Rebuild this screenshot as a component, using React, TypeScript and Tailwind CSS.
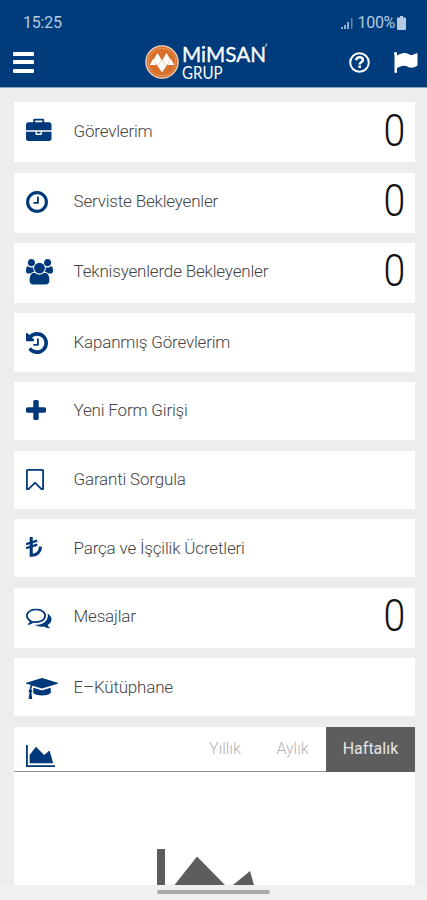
import type { ReactNode } from "react";

function Glyph({
	viewBox,
	d,
	className,
}: {
	viewBox: string;
	d: string;
	className: string;
}) {
	return (
		<svg
			viewBox={viewBox}
			preserveAspectRatio="none"
			fill="currentColor"
			className={className}
		>
			<path d={d} />
		</svg>
	);
}

const menuItems: { label: string; icon: ReactNode; count?: number }[] = [
	{
		label: "Görevlerim",
		count: 0,
		icon: (
			<Glyph
				className="w-[25.5px] h-[22.5px] -translate-y-[2.5px]"
				viewBox="0 0 1792 1536"
				d="M640 256h512v-128h-512v128zm1152 640v480q0 66-47 113t-113 47h-1472q-66 0-113-47t-47-113v-480h672v160q0 26 19 45t45 19h320q26 0 45-19t19-45v-160h672zm-768 0v128h-256v-128h256zm768-480v384h-1792v-384q0-66 47-113t113-47h352v-160q0-40 28-68t68-28h576q40 0 68 28t28 68v160h352q66 0 113 47t47 113z"
			/>
		),
	},
	{
		label: "Serviste Bekleyenler",
		count: 0,
		icon: (
			<Glyph
				className="size-[22px] -translate-y-px"
				viewBox="128 128 1536 1536"
				d="M1024 544v448q0 14-9 23t-23 9h-320q-14 0-23-9t-9-23v-64q0-14 9-23t23-9h224v-352q0-14 9-23t23-9h64q14 0 23 9t9 23zm416 352q0-148-73-273t-198-198-273-73-273 73-198 198-73 273 73 273 198 198 273 73 273-73 198-198 73-273zm224 0q0 209-103 385.5t-279.5 279.5-385.5 103-385.5-103-279.5-279.5-103-385.5 103-385.5 279.5-279.5 385.5-103 385.5 103 279.5 279.5 103 385.5z"
			/>
		),
	},
	{
		label: "Teknisyenlerde Bekleyenler",
		count: 0,
		icon: (
			<Glyph
				className="w-[27px] h-[25.5px] -translate-y-px"
				viewBox="0 0 1920 1792"
				d="M593 896q-162 5-265 128h-134q-82 0-138-40.5t-56-118.5q0-353 124-353 6 0 43.5 21t97.5 42.5 119 21.5q67 0 133-23-5 37-5 66 0 139 81 256zm1071 637q0 120-73 189.5t-194 69.5h-874q-121 0-194-69.5t-73-189.5q0-53 3.5-103.5t14-109 26.5-108.5 43-97.5 62-81 85.5-53.5 111.5-20q10 0 43 21.5t73 48 107 48 135 21.5 135-21.5 107-48 73-48 43-21.5q61 0 111.5 20t85.5 53.5 62 81 43 97.5 26.5 108.5 14 109 3.5 103.5zm-1024-1277q0 106-75 181t-181 75-181-75-75-181 75-181 181-75 181 75 75 181zm704 384q0 159-112.5 271.5t-271.5 112.5-271.5-112.5-112.5-271.5 112.5-271.5 271.5-112.5 271.5 112.5 112.5 271.5zm576 225q0 78-56 118.5t-138 40.5h-134q-103-123-265-128 81-117 81-256 0-29-5-66 66 23 133 23 59 0 119-21.5t97.5-42.5 43.5-21q124 0 124 353zm-128-609q0 106-75 181t-181 75-181-75-75-181 75-181 181-75 181 75 75 181z"
			/>
		),
	},
	{
		label: "Kapanmış Görevlerim",
		icon: (
			<Glyph
				className="size-[22px]"
				viewBox="128 128 1536 1536"
				d="M1664 896q0 156-61 298t-164 245-245 164-298 61q-172 0-327-72.5t-264-204.5q-7-10-6.5-22.5t8.5-20.5l137-138q10-9 25-9 16 2 23 12 73 95 179 147t225 52q104 0 198.5-40.5t163.5-109.5 109.5-163.5 40.5-198.5-40.5-198.5-109.5-163.5-163.5-109.5-198.5-40.5q-98 0-188 35.5t-160 101.5l137 138q31 30 14 69-17 40-59 40h-448q-26 0-45-19t-19-45v-448q0-42 40-59 39-17 69 14l130 129q107-101 244.5-156.5t284.5-55.5q156 0 298 61t245 164 164 245 61 298zm-640-288v448q0 14-9 23t-23 9h-320q-14 0-23-9t-9-23v-64q0-14 9-23t23-9h224v-352q0-14 9-23t23-9h64q14 0 23 9t9 23z"
			/>
		),
	},
	{
		label: "Yeni Form Girişi",
		icon: (
			<Glyph
				className="size-5 -translate-y-px"
				viewBox="192 128 1408 1408"
				d="M1600 736v192q0 40-28 68t-68 28h-416v416q0 40-28 68t-68 28h-192q-40 0-68-28t-28-68v-416h-416q-40 0-68-28t-28-68v-192q0-40 28-68t68-28h416v-416q0-40 28-68t68-28h192q40 0 68 28t28 68v416h416q40 0 68 28t28 68z"
			/>
		),
	},
	{
		label: "Garanti Sorgula",
		icon: (
			<Glyph
				className="w-[18px] h-[21.5px]"
				viewBox="256 128 1280 1508"
				d="M1408 256h-1024v1242l423-406 89-85 89 85 423 406v-1242zm12-128q23 0 44 9 33 13 52.5 41t19.5 62v1289q0 34-19.5 62t-52.5 41q-19 8-44 8-48 0-83-32l-441-424-441 424q-36 33-83 33-23 0-44-9-33-13-52.5-41t-19.5-62v-1289q0-34 19.5-62t52.5-41q21-9 44-9h1048z"
			/>
		),
	},
	{
		label: "Parça ve İşçilik Ücretleri",
		icon: (
			<svg
				viewBox="0 0 16 20"
				fill="none"
				stroke="currentColor"
				className="w-4 h-5 -translate-y-px"
			>
				<path d="M5.2 0v18.2c5.5.2 9.1-3 9.3-8.600" strokeWidth="3.1" />
				<path d="M0 7.200 11.300 3.600M0 11.200 11.300 7.600" strokeWidth="2.200" />
			</svg>
		),
	},
	{
		label: "Mesajlar",
		count: 0,
		icon: (
			<Glyph
				className="w-[25.5px] h-5 translate-y-[0.5px]"
				viewBox="0 256 1792 1408"
				d="M704 384q-153 0-286 52t-211.5 141-78.5 191q0 82 53 158t149 132l97 56-35 84q34-20 62-39l44-31 53 10q78 14 153 14 153 0 286-52t211.5-141 78.5-191-78.5-191-211.5-141-286-52zm0-128q191 0 353.5 68.5t256.5 186.5 94 257-94 257-256.5 186.5-353.5 68.5q-86 0-176-16-124 88-278 128-36 9-86 16h-3q-11 0-20.5-8t-11.5-21q-1-3-1-6.5t.5-6.5 2-6l2.5-5 3.5-5.5 4-5 4.5-5 4-4.5q5-6 23-25t26-29.5 22.5-29 25-38.5 20.5-44q-124-72-195-177t-71-224q0-139 94-257t256.5-186.5 353.5-68.5zm822 1169q10 24 20.5 44t25 38.5 22.5 29 26 29.5 23 25q1 1 4 4.5t4.5 5 4 5 3.5 5.5l2.5 5 2 6 .5 6.5-1 6.5q-3 14-13 22t-22 7q-50-7-86-16-154-40-278-128-90 16-176 16-271 0-472-132 58 4 88 4 161 0 309-45t264-129q125-92 192-212t67-254q0-77-23-152 129 71 204 178t75 230q0 120-71 224.5t-195 176.5z"
			/>
		),
	},
	{
		label: "E–Kütüphane",
		icon: (
			<Glyph
				className="w-8 h-[21px] translate-y-px"
				viewBox="0 128 2304 1536"
				d="M1774 836l18 316q4 69-82 128t-235 93.5-323 34.5-323-34.5-235-93.5-82-128l18-316 574 181q22 7 48 7t48-7zm530-324q0 23-22 31l-1120 352q-4 1-10 1t-10-1l-652-206q-43 34-71 111.5t-34 178.5q63 36 63 109 0 69-58 107l58 433q2 14-8 25-9 11-24 11h-192q-15 0-24-11-10-11-8-25l58-433q-58-38-58-107 0-73 65-111 11-207 98-330l-333-104q-22-8-22-31t22-31l1120-352q4-1 10-1t10 1l1120 352q22 8 22 31z"
			/>
		),
	},
];

function StatusBar() {
	return (
		<div className="flex h-11 items-center justify-between pt-0.5 pl-[23px] pr-[21px] text-[#b4cae2]">
			<span className="text-[16px] tracking-[-0.2px]">15:25</span>
			<div className="flex items-center">
				<svg viewBox="0 0 13 11" fill="currentColor" className="mr-1 w-[13px] h-[11px]">
					<path d="M0 9h2v2H0zM3 7h2v4H3zM6 4h2v7H6z" opacity=".8" />
					<path d="M10 0h1.500v11H10z" opacity=".5" />
				</svg>
				<span className="text-[16px] tracking-[-0.3px]">100%</span>
				<svg viewBox="0 0 9 14" fill="currentColor" className="ml-0.5 w-[9px] h-3.5">
					<path d="M3 0h3v1.500h2q1 0 1 1V13q0 1-1 1H1q-1 0-1-1V2.500q0-1 1-1h2z" />
				</svg>
			</div>
		</div>
	);
}

function Logo() {
	return (
		<div className="flex items-center">
			<svg viewBox="0 0 34 34" className="size-[34px]">
				<circle cx="17" cy="17" r="16.700" fill="#f3d9c5" />
				<circle cx="17" cy="17" r="15.400" fill="#d9702a" />
				<circle
					cx="17"
					cy="17"
					r="13.800"
					fill="none"
					stroke="#eba878"
					strokeWidth=".7"
				/>
				<g fill="#fff">
					<path d="m12.500 8 4 6.800-4 6.200-4-6.200zM21.500 8l4 6.800-4 6.200-4-6.200z" />
					<path d="m17 14.500 4.300 6.500-4.300 6.500-4.300-6.500z" />
					<path d="m8 14 3.500 6H4.800zM26 14l3.200 6h-6.700z" />
				</g>
			</svg>
			<div className="ml-[3px] flex flex-col text-white">
				<svg viewBox="0 0 88 22" className="w-[88px] h-[22px] overflow-visible">
					<text
						x="0"
						y="18.500"
						fill="#fff"
						stroke="#fff"
						strokeWidth=".3"
						fontFamily="Lato, sans-serif"
						fontSize="21"
						textLength="84"
						lengthAdjust="spacingAndGlyphs"
					>
						MiMSAN
					</text>
					<path d="M83.500 3.500 85 .500" stroke="#fff" strokeWidth="1" />
				</svg>
				<svg viewBox="0 0 42 16" className="w-[42px] h-4 overflow-visible">
					<text
						x="0"
						y="13.500"
						fill="#fff"
						fontFamily="Lato, sans-serif"
						fontSize="16.500"
						textLength="40.500"
						lengthAdjust="spacingAndGlyphs"
					>
						GRUP
					</text>
				</svg>
			</div>
		</div>
	);
}

function Header() {
	return (
		<header className="h-[88px] shrink-0 border-b border-[#8ba0b9] bg-[#003c7b]">
			<StatusBar />
			<div className="flex h-9 items-center pl-[13px] pr-[9px] text-white">
				<div className="flex w-[132px] flex-col gap-[4.5px]">
					<span className="h-1 w-[21px] rounded-[1px] bg-white" />
					<span className="h-1 w-[21px] rounded-[1px] bg-white" />
					<span className="h-1 w-[21px] rounded-[1px] bg-white" />
				</div>
				<Logo />
				<svg
					viewBox="0 0 21 21"
					fill="none"
					stroke="currentColor"
					className="ml-auto size-[21px]"
				>
					<circle cx="10.500" cy="10.500" r="9.300" strokeWidth="2" />
					<path
						d="M7 8.200c.5-2.100 1.900-2.900 3.600-2.900 1.900 0 3.300 1.100 3.300 2.700 0 2.300-3.200 2.200-3.200 4.400"
						strokeWidth="2.500"
					/>
					<path d="M9.400 14.700H12" strokeWidth="2.500" />
				</svg>
				<svg
					viewBox="0 0 24 21"
					fill="currentColor"
					className="ml-6 w-6 h-[21px]"
				>
					<path d="M0 1.500C0 .5.500 0 1.500 0S3 .5 3 1.500V20q0 1-1 1H1.500q-1 0-1-1V3Q0 2.500 0 1.500z" />
					<path d="M3 3.500C5.500 2 8 1 10.500 1c3.500 0 4.500 2 7 2 2 0 3.700-1 5-1.700q1-.4 1 .7V13q0 .5-.7 1c-1.800 1-3.500 1.700-5.300 1.700-3 0-4.500-2-7.500-2-2.300 0-4.700 1-7 2.300z" />
				</svg>
			</div>
		</header>
	);
}

function ChartCard() {
	return (
		<section className="flex h-[158px] flex-col bg-white">
			<div className="flex h-[45px] shrink-0 border-b border-[#8c8c8c]">
				<Glyph
					className="mt-[18px] ml-3 w-[29px] h-[22px] text-[#00397a]"
					viewBox="0 128 2048 1536"
					d="M2048 1536v128h-2048v-1536h128v1408h1920zm-384-1024l256 896h-1664v-576l448-576 576 576z"
				/>
				<div className="ml-auto flex h-[45px] items-center text-[16px] font-light text-[#b3b3b3]">
					<span className="w-[68px] text-center">Yıllık</span>
					<span className="w-[67px] text-center">Aylık</span>
					<span className="flex h-full w-[89px] items-center justify-center bg-[#5d5d5d] font-normal text-[#e6e6e6]">
						Haftalık
					</span>
				</div>
			</div>
			<svg
				viewBox="0 0 100 36"
				fill="#5d5d5d"
				className="mt-auto ml-[143px] w-[100px] h-9"
			>
				<path d="M0 0h8v36H0zM17.500 36 40 7.500 68 36zM76 36 93 22l4 14z" />
			</svg>
		</section>
	);
}

export default function App() {
	return (
		<div className="flex h-[900px] w-[427px] flex-col overflow-hidden bg-[#ededed] font-['Roboto',sans-serif]">
			<Header />
			<main className="flex flex-col gap-[10.4px] pt-[14.3px] pr-3 pl-3.5">
				{menuItems.map((item) => (
					<div
						key={item.label}
						className={`flex shrink-0 items-center bg-white pr-2.5 pl-3 ${
							item.count === undefined ? "h-[58.2px]" : "h-[60px] pb-0.5"
						}`}
					>
						<div className="w-[47.5px] text-[#00397a]">
							<div className={item.count === undefined ? "" : "pt-0.5"}>
								{item.icon}
							</div>
						</div>
						<span className="text-[17px] font-light tracking-[-0.18px] text-[#444]">
							{item.label}
						</span>
						{item.count !== undefined && (
							<span className="ml-auto origin-right scale-x-90 text-[43.5px] leading-none font-light text-[#111]">
								{item.count}
							</span>
						)}
					</div>
				))}
				<ChartCard />
			</main>
			<div className="flex flex-1 justify-center bg-[#f0f0f0] pt-[5px]">
				<span className="h-1 w-[113px] rounded-full bg-[#a9a9a9]" />
			</div>
		</div>
	);
}
